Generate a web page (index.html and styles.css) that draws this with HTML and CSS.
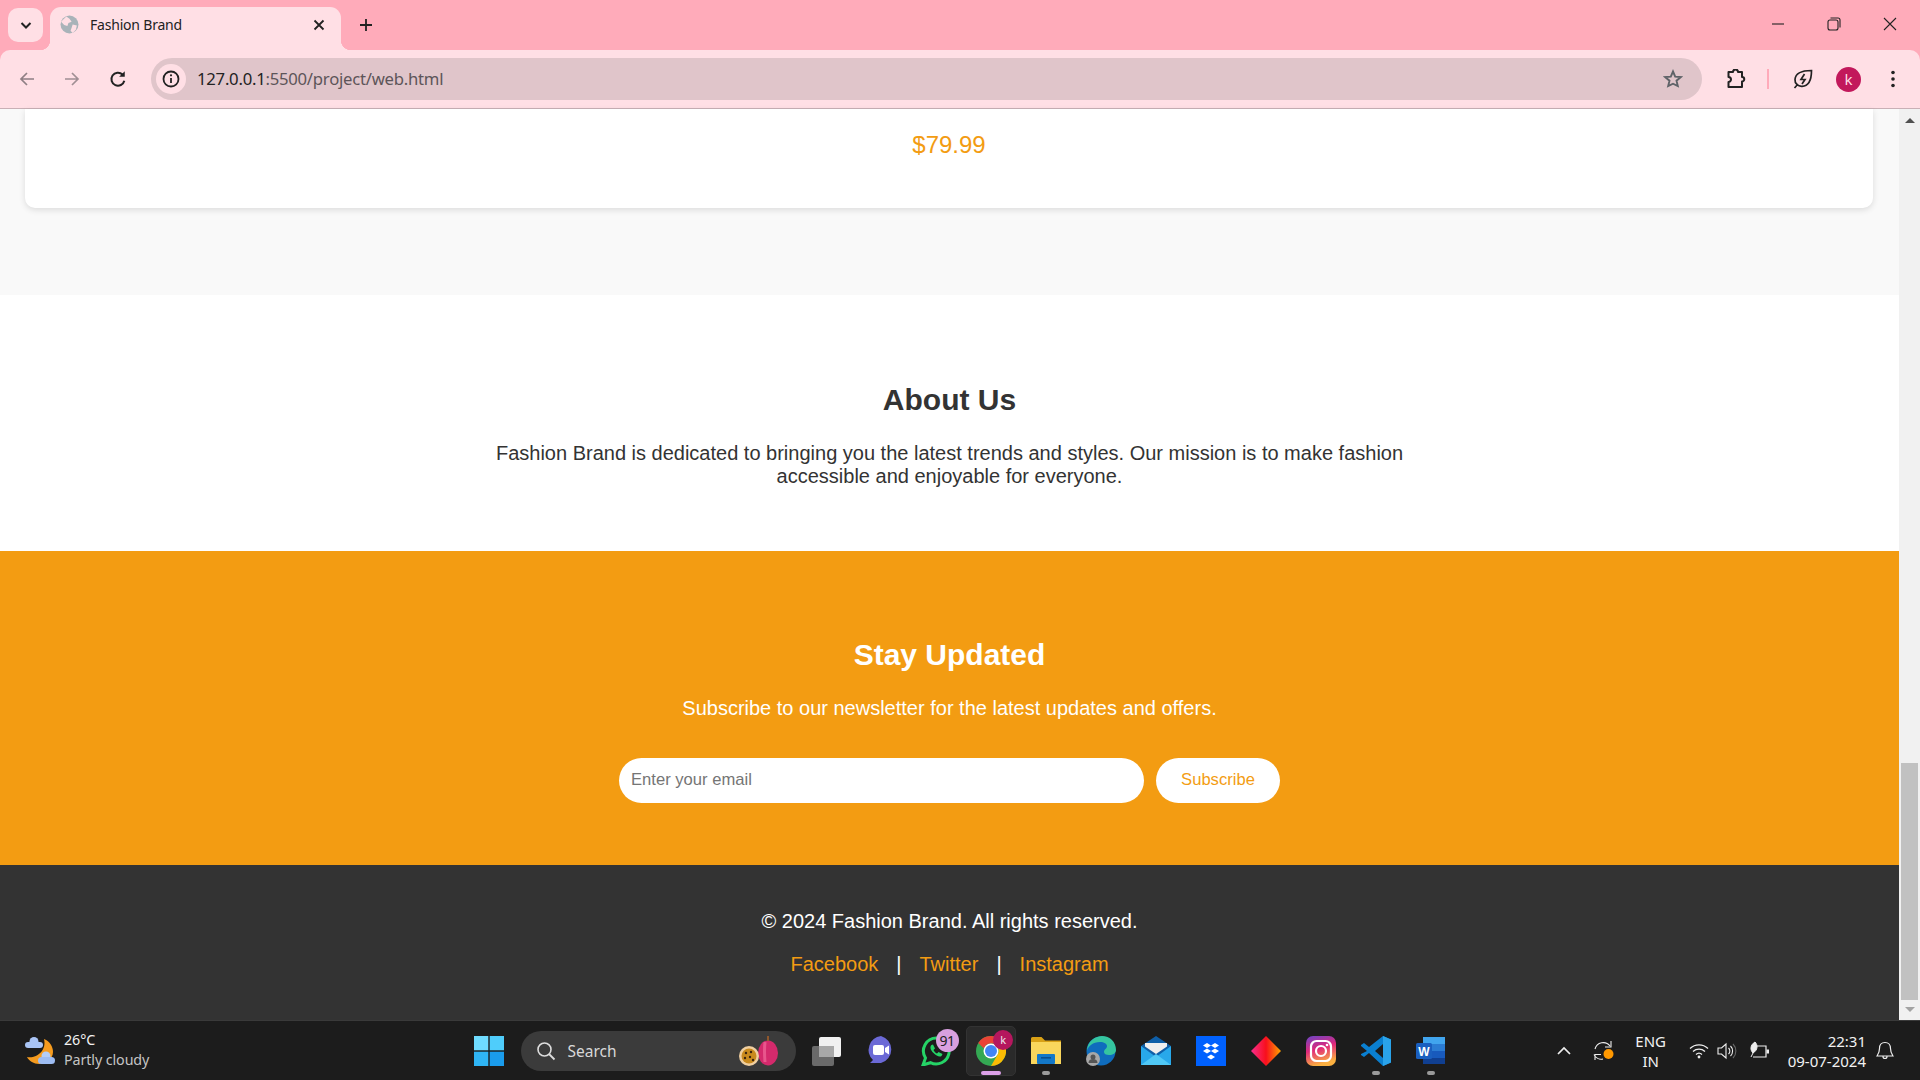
FILE: index.html
```html
<!DOCTYPE html>
<html lang="en">
<head>
<meta charset="utf-8">
<title>Fashion Brand</title>
<link rel="stylesheet" href="styles.css">
</head>
<body>
<div class="window">
  <header class="tabbar">
    <button class="tab-list"><svg width="14" height="14" viewBox="0 0 14 14"><path d="M2.500 5l4.500 4.500L11.500 5" fill="none" stroke="#222" stroke-width="2"/></svg></button>
    <div class="tab">
      <svg class="favicon" width="19" height="19" viewBox="0 0 18 18"><circle cx="9" cy="9" r="8.500" fill="#a9b3b9"/><path d="M6 1.500l3 2 2 3-3 1-1 3-3-1-3-3zM12 9l4 1-1 4-3 3-2-2 1-3z" fill="#ffdfe5"/></svg>
      <span class="tab-title">Fashion Brand</span>
      <svg class="tab-close" width="12" height="12" viewBox="0 0 12 12"><path d="M1.500 1.500l9 9M10.500 1.500l-9 9" stroke="#222" stroke-width="1.800"/></svg>
    </div>
    <svg class="new-tab" width="14" height="14" viewBox="0 0 14 14"><path d="M7 1v12M1 7h12" stroke="#222" stroke-width="1.800"/></svg>
    <div class="win-controls">
      <svg width="14" height="14" viewBox="0 0 14 14"><path d="M1 7h12" stroke="#222" stroke-width="1.100"/></svg>
      <svg width="14" height="14" viewBox="0 0 14 14"><rect x="1" y="3" width="10" height="10" rx="2" fill="none" stroke="#222" stroke-width="1.100"/><path d="M3.500 1h7.500a2 2 0 0 1 2 2v7.500" fill="none" stroke="#222" stroke-width="1.100"/></svg>
      <svg width="14" height="14" viewBox="0 0 14 14"><path d="M1 1l12 12M13 1L1 13" stroke="#222" stroke-width="1.100"/></svg>
    </div>
  </header>

  <nav class="toolbar">
    <svg class="nav-icon" width="16" height="16" viewBox="0 0 16 16"><path d="M15 8H2M8 2L2 8l6 6" fill="none" stroke="#8f7f84" stroke-width="1.700"/></svg>
    <svg class="nav-icon" width="16" height="16" viewBox="0 0 16 16"><path d="M1 8h13M8 2l6 6-6 6" fill="none" stroke="#a08f94" stroke-width="1.700"/></svg>
    <svg class="nav-icon" width="18" height="18" viewBox="0 0 16 16"><path d="M13.600 9.500A5.800 5.800 0 1 1 12 4" fill="none" stroke="#222" stroke-width="1.800"/><path d="M14 1v5H9z" fill="#222"/></svg>
    <div class="omnibox">
      <span class="site-info"><svg width="18" height="18" viewBox="0 0 18 18"><circle cx="9" cy="9" r="7.500" fill="none" stroke="#222" stroke-width="1.800"/><path d="M9 8v5" stroke="#222" stroke-width="1.800"/><circle cx="9" cy="5.300" r="1.100" fill="#222"/></svg></span>
      <span class="url"><span class="url-host">127.0.0.1</span>:5500/project/web.html</span>
      <svg class="star" width="20" height="20" viewBox="0 0 20 20"><path d="M10 2.500l2.200 5.100 5.500.5-4.200 3.600 1.300 5.400L10 14.700l-4.800 2.400 1.300-5.400-4.200-3.600 5.500-.5z" fill="none" stroke="#5f6368" stroke-width="1.900"/></svg>
    </div>
    <svg class="ext" width="20" height="20" viewBox="0 0 20 20"><path d="M2.500 3h4.500a2.500 2.500 0 0 1 5 0h4v5a2.200 2.200 0 0 1 0 4.500V18H2.500v-5a2.500 2.500 0 0 0 0-5z" fill="none" stroke="#222" stroke-width="2" stroke-linejoin="round"/></svg>
    <span class="tool-sep"></span>
    <svg class="leaf" width="20" height="20" viewBox="0 0 20 20"><path d="M18.500 1.500C9 1.500 2.500 4 2 10.500c-.3 4 3 7 7 6.800 7-.3 9.500-7.300 9.500-15.800zM1.500 19l3.500-4" fill="none" stroke="#222" stroke-width="1.700"/><path d="M11.500 5L8 10.500h4L9 15" fill="none" stroke="#222" stroke-width="1.700"/></svg>
    <span class="avatar">k</span>
    <svg class="menu" width="6" height="20" viewBox="0 0 6 20"><circle cx="3" cy="3.500" r="1.800" fill="#222"/><circle cx="3" cy="10" r="1.800" fill="#222"/><circle cx="3" cy="16.500" r="1.800" fill="#222"/></svg>
  </nav>

  <div class="viewport">
    <main class="page">
      <section class="products">
        <div class="card"><p class="price">$79.99</p></div>
      </section>
      <section class="about">
        <h2>About Us</h2>
        <p>Fashion Brand is dedicated to bringing you the latest trends and styles. Our mission is to make fashion accessible and enjoyable for everyone.</p>
      </section>
      <section class="newsletter">
        <h2>Stay Updated</h2>
        <p>Subscribe to our newsletter for the latest updates and offers.</p>
        <form class="signup">
          <input type="email" placeholder="Enter your email">
          <button type="button">Subscribe</button>
        </form>
      </section>
      <footer class="footer">
        <p>© 2024 Fashion Brand. All rights reserved.</p>
        <p class="links"><a href="#">Facebook</a><span>|</span><a href="#">Twitter</a><span>|</span><a href="#">Instagram</a></p>
      </footer>
    </main>
    <aside class="scrollbar">
      <i class="arrow up"></i>
      <i class="thumb"></i>
      <i class="arrow down"></i>
    </aside>
  </div>

  <footer class="taskbar">
    <div class="tb-left">
      <svg width="32" height="30" viewBox="0 0 32 30"><path d="M20 3c6 2 9 8 9 13 0 7-7 12-14 12-5 0-10-3-12-7 9 2 20-6 17-18z" fill="#f59b1e"/><g fill="#a9c4f5"><circle cx="10" cy="5.500" r="4.500"/><rect x="1" y="6" width="18" height="6" rx="3"/><circle cx="22" cy="20" r="4.500" fill="#b4cdf7"/><rect x="14" y="21" width="17" height="7" rx="3.500" fill="#9dbcf2"/></g></svg>
      <div class="weather"><span>26°C</span><span class="weather-sub">Partly cloudy</span></div>
    </div>
    <div class="tb-center">
      <span class="tb-item win"><svg width="30" height="30" viewBox="0 0 30 30"><rect x="0" y="0" width="14.300" height="14.300" fill="#6fdcff"/><rect x="15.700" y="0" width="14.300" height="14.300" fill="#4fcdfb"/><rect x="0" y="15.700" width="14.300" height="14.300" fill="#2fb5f5"/><rect x="15.700" y="15.700" width="14.300" height="14.300" fill="#1a9cec"/></svg></span>
      <div class="search">
        <svg width="20" height="20" viewBox="0 0 20 20"><circle cx="8.500" cy="8.500" r="6.500" fill="none" stroke="#ddd" stroke-width="1.600"/><path d="M13 13l5.500 5.500" stroke="#ddd" stroke-width="1.800"/></svg>
        <span class="search-label">Search</span>
        <svg class="fruit" width="39" height="30" viewBox="0 0 39 30"><ellipse cx="29" cy="17" rx="10" ry="12.500" fill="#d42a6c"/><path d="M26 6q-1 8 0 20" fill="none" stroke="#e8568c" stroke-width="3"/><path d="M29 5V0" stroke="#9a5b2c" stroke-width="1.800"/><circle cx="10" cy="20" r="10" fill="#f0cfa0"/><circle cx="10" cy="20" r="7.500" fill="#c98a1e"/><g fill="#3b2410"><circle cx="7" cy="17" r="1.200"/><circle cx="12" cy="16" r="1.200"/><circle cx="6" cy="22" r="1.200"/><circle cx="11" cy="21" r="1.200"/><circle cx="14" cy="24" r="1.200"/></g></svg>
      </div>
      <span class="tb-item"><svg width="30" height="30" viewBox="0 0 30 30"><rect x="1" y="10" width="22" height="20" rx="2" fill="#6a6a6a"/><rect x="8" y="1" width="22" height="20" rx="2" fill="#f1f1f1"/><rect x="8" y="10" width="15" height="11" fill="#a8a8a8"/></svg></span>
      <span class="tb-item"><svg width="30" height="30" viewBox="0 0 30 30"><path d="M15 0a14 14 0 0 1 0 27H4l3-3A14 14 0 0 1 15 0z" fill="#6b69d6"/><rect x="7" y="9" width="11" height="10" rx="2" fill="#fff"/><path d="M19 12l4-2.500v9L19 16z" fill="#fff"/></svg></span>
      <span class="tb-item"><svg width="30" height="30" viewBox="0 0 30 30"><path d="M15.500 2a13 13 0 0 0-11 20L2 29l7.500-2.300A13 13 0 1 0 15.500 2z" fill="none" stroke="#25d366" stroke-width="3"/><path d="M10.500 9c-2 2-1 5 2 8s6 4.500 8 3l1-2-4-2-1.500 1.500c-1.500-.5-3-2.500-3.500-3.500l1.500-1.500-2-4z" fill="#25d366"/></svg><b class="badge">91</b></span>
      <span class="tb-item active"><svg width="30" height="30" viewBox="0 0 30 30"><circle cx="15" cy="15" r="15" fill="#34a853"/><path d="M15 0a15 15 0 0 1 13 7.500H15a7.500 7.500 0 0 0-7 5L2.200 7A15 15 0 0 1 15 0z" fill="#ea4335"/><path d="M28 7.500A15 15 0 0 1 15 30l6.500-11.200A7.500 7.500 0 0 0 21.500 11z" fill="#fbbc04"/><circle cx="15" cy="15" r="7.500" fill="#fff"/><circle cx="15" cy="15" r="6" fill="#4285f4"/></svg><b class="badge k">k</b><i class="running on"></i></span>
      <span class="tb-item"><svg width="30" height="28" viewBox="0 0 30 28"><path d="M0 1.500A1.500 1.500 0 0 1 1.500 0h9L14 3.500h16V27H0z" fill="#d9a116"/><rect x="0" y="5" width="30" height="22" fill="#f9d65c"/><rect x="6" y="17" width="18" height="10" rx="1" fill="#1478c8"/><rect x="10" y="20" width="10" height="1.600" fill="#0b4f8f"/></svg><i class="running"></i></span>
      <span class="tb-item"><svg width="30" height="30" viewBox="0 0 30 30"><circle cx="15" cy="15" r="14.500" fill="#0f6cbd"/><path d="M1 15C1 5 10 0 16 0c8 0 14 6 14 14 0 3-3 5-7 5-3 0-5-1-5-3 0-3 3-3 3-6 0-2-3-4-7-4C7 6 2 10 1 15z" fill="#35c5a0"/><circle cx="7" cy="23" r="7" fill="#a8a8a8"/><circle cx="7" cy="21" r="2.500" fill="#555"/><path d="M2.500 27c0-3 2-4 4.500-4s4.500 1 4.500 4z" fill="#555"/></svg></span>
      <span class="tb-item"><svg width="30" height="30" viewBox="0 0 30 30"><path d="M0 10L15 0l15 10v19H0z" fill="#0f5fa8"/><path d="M0 10l15 11 15-11v19H0z" fill="#28a8ea"/><path d="M4 7h22v3.500L15 18 4 10.500z" fill="#eee"/><path d="M0 29l15-11 15 11z" fill="#50c8f5"/></svg></span>
      <span class="tb-item"><svg width="30" height="30" viewBox="0 0 30 30"><rect width="30" height="30" fill="#0061fe"/><path d="M11 7l4 2.500-4 2.500-4-2.500zM19 7l4 2.500-4 2.500-4-2.500zM11 12.500l4 2.500-4 2.500-4-2.500zM19 12.500l4 2.500-4 2.500-4-2.500zM15 18.500l4 2.500-4 2.500-4-2.500z" fill="#fff"/></svg></span>
      <span class="tb-item"><svg width="30" height="30" viewBox="0 0 30 30"><defs><linearGradient id="dia" x1="0" x2="1" y1="0" y2="0"><stop offset="0" stop-color="#f72e8f"/><stop offset=".5" stop-color="#f80f1c"/><stop offset="1" stop-color="#ffa500"/></linearGradient></defs><path d="M15 0l15 15-15 15L0 15z" fill="url(#dia)"/></svg></span>
      <span class="tb-item"><svg width="30" height="30" viewBox="0 0 30 30"><defs><linearGradient id="ig" x1="0" x2=".3" y1="0" y2="1"><stop offset="0" stop-color="#6a45c9"/><stop offset=".5" stop-color="#e0287a"/><stop offset="1" stop-color="#fbb040"/></linearGradient></defs><rect width="30" height="30" rx="7" fill="url(#ig)"/><rect x="5" y="5" width="20" height="20" rx="5.500" fill="none" stroke="#fff" stroke-width="2.200"/><circle cx="15" cy="15" r="5" fill="none" stroke="#fff" stroke-width="2.200"/><circle cx="21" cy="9" r="1.300" fill="#fff"/></svg></span>
      <span class="tb-item"><svg width="30" height="30" viewBox="0 0 30 30"><path d="M22 0l8 3.500v23L22 30 8 17 3 21l-3-2v-1l6-3-6-5V9l3-2 5 4z" fill="#0a7fd0"/><path d="M22 0l8 3.500v23L22 30z" fill="#2aa3ea"/><path d="M22 8l-8 7 8 7z" fill="#1c1c1c"/></svg><i class="running"></i></span>
      <span class="tb-item"><svg width="30" height="28" viewBox="0 0 30 28"><rect x="7" y="0" width="22" height="7" fill="#41a5ee"/><rect x="7" y="7" width="22" height="7" fill="#2b7cd3"/><rect x="7" y="14" width="22" height="7" fill="#185abd"/><rect x="7" y="21" width="22" height="6" fill="#103f91"/><rect x="0" y="6" width="16" height="16" rx="1.500" fill="#1a5fbf"/><text x="8" y="18.500" class="word-w">W</text></svg><i class="running"></i></span>
    </div>
    <div class="tb-right">
      <svg class="tray-chevron" width="14" height="9" viewBox="0 0 14 9"><path d="M1 8l6-6 6 6" fill="none" stroke="#eee" stroke-width="1.700"/></svg>
      <svg class="tray-sync" width="22" height="22" viewBox="0 0 22 22"><path d="M2 9a8.500 8.500 0 0 1 15-3" fill="none" stroke="#eee" stroke-width="1.100"/><path d="M18 1v6h-6M1 14.500a8 8 0 0 0 9 4.500M2 20v-5.500h6" fill="none" stroke="#eee" stroke-width="1.100"/><circle cx="15.500" cy="14" r="5" fill="#ff9800"/></svg>
      <div class="lang"><span>ENG</span><span>IN</span></div>
      <svg class="tray-wifi" width="20" height="16" viewBox="0 0 20 16"><path d="M1 5.500a13 13 0 0 1 18 0M4 8.500a9 9 0 0 1 12 0M7 11.500a4.500 4.500 0 0 1 6 0" fill="none" stroke="#eee" stroke-width="1.300"/><circle cx="10" cy="14" r="1.400" fill="#eee"/></svg>
      <svg class="tray-vol" width="20" height="18" viewBox="0 0 20 18"><path d="M1 6h3.500L9 2v14l-4.500-4H1z" fill="none" stroke="#eee" stroke-width="1.100"/><path d="M11.500 6a4 4 0 0 1 0 6M13.500 4a7 7 0 0 1 0 10" fill="none" stroke="#eee" stroke-width="1.100"/><path d="M16 2a10 10 0 0 1 0 14" fill="none" stroke="#666" stroke-width="1.100"/></svg>
      <svg class="tray-batt" width="22" height="20" viewBox="0 0 22 20"><path d="M7 5h11v11H5" fill="none" stroke="#eee" stroke-width="1.200"/><rect x="18.500" y="8.500" width="2.500" height="4" fill="#eee"/><path d="M7 1c3 3 3 8-2 11-3-3-3-8 2-11zM3 16l3-6" fill="#eee" stroke="#eee"/></svg>
      <div class="clock"><span>22:31</span><span>09-07-2024</span></div>
      <svg class="tray-bell" width="18" height="20" viewBox="0 0 18 20"><path d="M9 1.500c-3.500 0-5.500 2.500-5.500 6 0 4-1.500 6-2.500 7.500h16c-1-1.500-2.500-3.500-2.500-7.500 0-3.500-2-6-5.500-6zM7 15.500a2 2 0 0 0 4 0" fill="none" stroke="#eee" stroke-width="1.200"/></svg>
    </div>
  </footer>
</div>
</body>
</html>
```
FILE: styles.css
```css
* { box-sizing: border-box; }
html, body { margin: 0; height: 100%; overflow: hidden; }
body { font-family: "Liberation Sans", Arial, sans-serif; background: #1c1c1c; }
.window { height: 100vh; display: flex; flex-direction: column; background: #ffabba; }

.tabbar { height: 50px; flex: none; background: #ffabba; display: flex; align-items: flex-start; padding-left: 8px; }
.tab-list { width: 35px; height: 34px; margin-top: 8px; border: 0; padding: 0; border-radius: 10px; background: #ffdfe5; display: flex; align-items: center; justify-content: center; }
.tab { position: relative; width: 291px; height: 43px; margin: 7px 0 0 7px; padding: 0 16px 8px 10px; background: #ffdfe5; border-radius: 11px 11px 0 0; display: flex; align-items: center; font: 14px "Noto Sans", sans-serif; color: #222; }
.tab::before, .tab::after { content: ""; position: absolute; bottom: 0; width: 10px; height: 10px; }
.tab::before { left: -10px; background: radial-gradient(circle at 0 0, transparent 10px, #ffdfe5 10.500px); }
.tab::after { right: -10px; background: radial-gradient(circle at 100% 0, transparent 10px, #ffdfe5 10.500px); }
.favicon { margin-right: 11px; flex: none; }
.tab-title { flex: 1; letter-spacing: -.2px; }
.new-tab { margin: 18px 0 0 18px; }
.win-controls { margin-left: auto; display: flex; gap: 42px; padding: 17px 23px 0 0; }

.toolbar { height: 59px; flex: none; background: #ffdfe5; border-bottom: 1px solid #c9b0b6; border-radius: 10px 10px 0 0; display: flex; align-items: center; padding-left: 19px; }
.nav-icon { margin-right: 29px; flex: none; }
.nav-icon:nth-child(3) { margin-right: 24px; }
.omnibox { width: 1551px; height: 42px; background: #e0c5ca; border-radius: 21px; display: flex; align-items: center; padding: 0 19px 0 5px; margin-top: -1px; }
.site-info { width: 30px; height: 30px; border-radius: 50%; background: #ffdfe5; display: flex; align-items: center; justify-content: center; flex: none; }
.url { flex: 1; margin-left: 11px; font: 16.700px "Noto Sans", sans-serif; color: #5d5559; letter-spacing: -.25px; }
.url-host { color: #222; }
.ext { margin-left: 24px; flex: none; }
.tool-sep { width: 2px; height: 20px; background: #ffabba; margin: 0 24px 0 21px; flex: none; }
.leaf { flex: none; }
.avatar { width: 25px; height: 25px; margin-left: 23px; border-radius: 50%; background: #c2185b; color: #ffdfe5; font: 15px/25px "Noto Sans", sans-serif; text-align: center; flex: none; }
.menu { margin-left: 29px; flex: none; }

.viewport { flex: 1; min-height: 0; display: flex; background: #f9f9f9; }
.page { flex: 1; min-width: 0; text-align: center; color: #333; }
.products { height: 186px; background: #f9f9f9; padding: 0 26px 0 25px; }
.card { height: 99px; background: #fff; border-radius: 0 0 10px 10px; box-shadow: 0 2px 6px rgba(0,0,0,.12); display: flex; align-items: flex-start; justify-content: center; }
.price { margin: 22px 0 0; font-size: 24px; line-height: 28px; color: #f39c12; }
.about { height: 256px; background: #fff; padding-top: 87px; }
.about h2, .newsletter h2 { margin: 0; font-size: 30px; line-height: 35px; }
.about p { width: 920px; margin: 25px auto 0; font-size: 20px; line-height: 23px; }
.newsletter { height: 314px; background: #f39c12; color: #fff; padding-top: 86px; }
.newsletter p { margin: 25px 0 0; font-size: 20px; line-height: 23px; }
.signup { display: flex; justify-content: center; gap: 12px; margin-top: 38px; }
.signup input { width: 525px; height: 45px; border: 0; border-radius: 25px; padding: 0 12px 2px; font: 16.600px "Liberation Sans", sans-serif; color: #333; background: #fff; }
.signup input::placeholder { color: #757575; }
.signup button { width: 124px; height: 45px; border: 0; border-radius: 25px; padding: 0 0 2px; background: #fff; color: #f39c12; font: 16.600px "Liberation Sans", sans-serif; }
.footer { height: 155px; background: #333; color: #fff; padding-top: 45px; font-size: 20px; line-height: 23px; }
.footer p { margin: 0; }
.footer .links { margin-top: 20px; display: flex; justify-content: center; gap: 18px; }
.footer a { color: #f39c12; text-decoration: none; }

.scrollbar { width: 21px; flex: none; background: #f1f1f1; display: flex; flex-direction: column; align-items: center; }
.arrow { width: 0; height: 0; border-left: 5px solid transparent; border-right: 5px solid transparent; }
.arrow.up { border-bottom: 5px solid #505050; margin-top: 9px; }
.arrow.down { border-top: 5px solid #a3a3a3; margin-top: 7px; }
.thumb { width: 17px; height: 237px; background: #c1c1c1; margin-top: 640px; }

.taskbar { height: 60px; flex: none; background: #1c1c1c; border-top: 1px solid #3a3a3a; display: grid; grid-template-columns: 1fr auto 1fr; align-items: center; color: #f2f2f2; font: 14.300px "Noto Sans", sans-serif; }
.tb-left { display: flex; align-items: center; gap: 8px; padding-left: 24px; }
.weather { display: flex; flex-direction: column; line-height: 20px; letter-spacing: -.1px; margin-top: -1px; }
.weather-sub { color: #c4c4c4; }
.tb-center { display: flex; align-items: center; height: 100%; }
.tb-item { position: relative; width: 55px; height: 50px; flex: none; display: flex; align-items: center; justify-content: center; }
.tb-item.active { width: 50px; margin: 0 2.500px; background: #2a2a2a; border: 1px solid #333; border-radius: 5px; }
.search { width: 275px; height: 40px; margin: 0 3px 0 4px; border-radius: 20px; background: #3b3b3b; display: flex; align-items: center; padding: 0 18px 0 15px; }
.search-label { flex: 1; margin-left: 12px; font-size: 15.500px; color: #d8d8d8; }
.badge { position: absolute; top: 3px; left: 27px; width: 23px; height: 23px; border-radius: 50%; background: #d9a0e0; color: #222; font: 400 14px/23px "Noto Sans", sans-serif; text-align: center; letter-spacing: -.5px; }
.badge.k { top: 3px; left: 26px; width: 20px; height: 20px; background: #b5175e; color: #eee; font-size: 11px; line-height: 20px; }
.running { position: absolute; bottom: 1px; left: 50%; width: 8px; height: 4px; margin-left: -4px; border-radius: 2px; background: #9a9a9a; }
.running.on { width: 20px; margin-left: -10px; bottom: 0; background: #dca0e8; }
.word-w { font: 700 12px "Liberation Sans", sans-serif; fill: #fff; text-anchor: middle; }
.tb-right { display: flex; align-items: center; justify-content: flex-end; color: #f2f2f2; padding-right: 26px; }
.tray-chevron { margin-right: 22px; }
.tray-sync { margin-right: 20px; }
.lang { width: 32px; margin-right: 22px; display: flex; flex-direction: column; align-items: center; line-height: 20px; font-size: 15px; }
.tray-wifi { margin-right: 8px; }
.tray-vol { margin-right: 11px; }
.tray-batt { margin-right: 18px; }
.clock { display: flex; flex-direction: column; align-items: flex-end; line-height: 20px; margin-right: 10px; font-size: 15px; }
```
